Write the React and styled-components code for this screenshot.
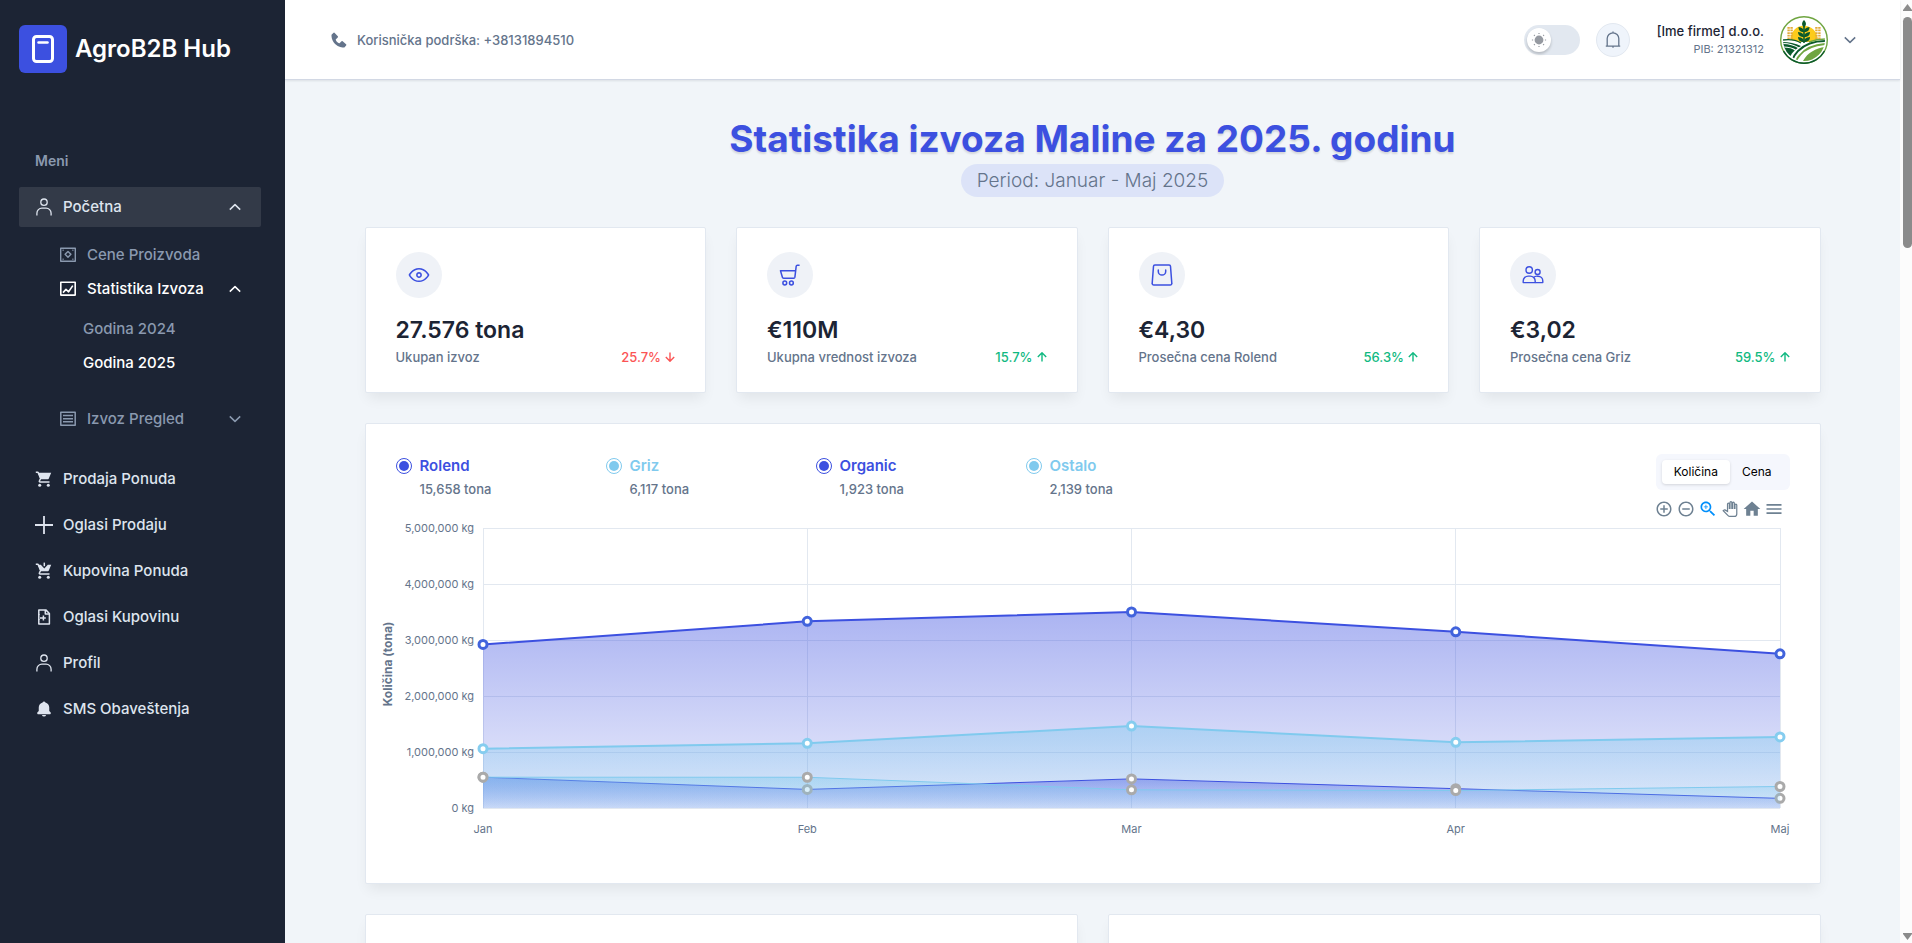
import React, { useLayoutEffect, useRef, useState } from 'react';
import styled, { createGlobalStyle, css } from 'styled-components';
import { BiSolidBell, BiSolidPhone } from 'react-icons/bi';

const c = {
  primary: '#3c50e0',
  sky: '#80caee',
  ink: '#1c2434',
  body: '#64748b',
  stroke: '#e2e8f0',
  canvas: '#f1f5f9',
  navText: '#dee4ee',
  navMuted: '#8a99af',
  up: '#10b981',
  down: '#fb5454',
};

const GlobalStyle = createGlobalStyle`
  *, *::before, *::after { box-sizing: border-box; }
  body {
    margin: 0;
    background: ${c.canvas};
    color: ${c.body};
    font-family: Inter, "Noto Sans", sans-serif;
    font-size: 15px;
    line-height: 24px;
  }
  h1, h2, h4, p, ul { margin: 0; padding: 0; }
  ul { list-style: none; }
  a { color: inherit; text-decoration: none; }
  button { border: 0; padding: 0; background: none; font: inherit; color: inherit; cursor: pointer; }
  svg { display: block; }
`;

const Shell = styled.div`
  display: flex;
  height: 100vh;
  overflow: hidden;
`;

/* ---------- sidebar ---------- */

const Sidebar = styled.aside`
  flex: 0 0 285px;
  background: ${c.ink};
  color: ${c.navText};
  font-weight: 500;
`;

const Brand = styled.a`
  display: flex;
  align-items: center;
  gap: 8px;
  padding: 25px 19px 0;
  color: #fff;
  font-size: 24px;
  font-weight: 600;
`;

const Nav = styled.nav`
  padding: 76px 24px 0 19px;
`;

const NavTitle = styled.h2`
  padding-left: 16px;
  margin-bottom: 14px;
  font-size: 14px;
  font-weight: 600;
  color: ${c.navMuted};
`;

const NavList = styled.ul`
  display: flex;
  flex-direction: column;
  gap: 6px;
`;

const NavLink = styled.a`
  display: flex;
  align-items: center;
  gap: 10px;
  height: 40px;
  padding: 0 20px 0 16px;
  border-radius: 2px;
  background: ${(p) => (p.$active ? '#333a48' : 'transparent')};
`;

const Grow = styled.span`
  flex: 1;
`;

const SubList = styled.ul`
  display: flex;
  flex-direction: column;
  gap: 10px;
  padding: 16px 20px 22px 41px;
`;

const SubLink = styled.a`
  display: flex;
  align-items: center;
  gap: 11px;
  color: ${(p) => (p.$active ? '#fff' : c.navMuted)};
`;

const YearList = styled.ul`
  display: flex;
  flex-direction: column;
  gap: 10px;
  padding: 16px 0 22px 23px;
`;

/* ---------- top bar ---------- */

const Main = styled.div`
  flex: 1;
  min-width: 0;
  display: flex;
  flex-direction: column;
`;

const TopBar = styled.header`
  position: relative;
  flex: 0 0 80px;
  display: flex;
  align-items: center;
  justify-content: space-between;
  padding: 0 44px;
  border-bottom: 1px solid #d2d8e4;
  background: #fff;
  box-shadow: 0 1px 2px rgba(28, 36, 52, 0.1);
`;

const Support = styled.a`
  display: flex;
  align-items: center;
  gap: 8px;
  font-size: 13px;
  font-weight: 500;
`;

const Tools = styled.div`
  display: flex;
  align-items: center;
  gap: 16px;
`;

const ThemeSwitch = styled.label`
  display: flex;
  align-items: center;
  width: 56px;
  height: 30px;
  padding: 0 3px;
  border-radius: 15px;
  background: ${c.stroke};
  cursor: pointer;
`;

const HiddenInput = styled.input`
  position: absolute;
  opacity: 0;
  width: 1px;
  height: 1px;
  margin: 0;
`;

const Knob = styled.span`
  display: grid;
  place-items: center;
  width: 24px;
  height: 24px;
  border-radius: 50%;
  background: #fff;
  box-shadow: 0 2px 3px rgba(0, 0, 0, 0.2);
`;

const BellButton = styled.button`
  display: grid;
  place-items: center;
  width: 34px;
  height: 34px;
  border: 1px solid ${c.stroke};
  border-radius: 50%;
  background: #eff4fb;
`;

const Account = styled.button`
  display: flex;
  align-items: center;
  gap: 16px;
  padding-left: 11px;
`;

const Company = styled.span`
  display: grid;
  text-align: right;
  font-size: 13px;
  line-height: 18px;
  font-weight: 500;
  color: ${c.ink};
`;

const TaxId = styled.span`
  font-size: 11px;
  font-weight: 400;
  color: ${c.body};
`;

/* ---------- content ---------- */

const Scroll = styled.main`
  flex: 1;
  min-height: 0;
  overflow-y: auto;
  scrollbar-width: none;
`;

const Container = styled.div`
  max-width: 1536px;
  margin: 0 auto;
  padding: 40px;
`;

const Heading = styled.div`
  display: flex;
  flex-direction: column;
  align-items: center;
  gap: 6px;
  margin-bottom: 30px;
`;

const Title = styled.h1`
  color: ${c.primary};
  font-size: 37px;
  line-height: 38px;
  font-weight: 700;
  text-shadow: 0 2px 2px rgba(0, 0, 0, 0.12);
`;

const Period = styled.p`
  padding: 0 16px;
  border-radius: 17px;
  background: #dce3f8;
  font-size: 19px;
  line-height: 33px;
  font-weight: 300;
`;

const StatGrid = styled.section`
  display: grid;
  grid-template-columns: repeat(4, 1fr);
  gap: 30px;
  margin-bottom: 30px;
`;

const Card = styled.article`
  border: 1px solid ${c.stroke};
  border-radius: 2px;
  background: #fff;
  box-shadow: 0 8px 13px -3px rgba(0, 0, 0, 0.07);
`;

const StatCard = styled(Card)`
  padding: 24px 30px;
`;

const IconDisc = styled.div`
  display: grid;
  place-items: center;
  width: 46px;
  height: 46px;
  margin-bottom: 16px;
  border-radius: 50%;
  background: #eff2f7;
  color: ${c.primary};
`;

const StatValue = styled.h4`
  color: ${c.ink};
  font-size: 23px;
  line-height: 32px;
  font-weight: 600;
`;

const StatRow = styled.div`
  display: flex;
  align-items: center;
  justify-content: space-between;
  font-size: 13px;
  line-height: 22px;
  font-weight: 500;
`;

const Change = styled.span`
  display: flex;
  align-items: center;
  gap: 4px;
  color: ${(p) => (p.$down ? c.down : c.up)};
`;

/* ---------- chart card ---------- */

const ChartCard = styled(Card)`
  padding: 30px 30px 24px;
  margin-bottom: 30px;
`;

const ChartHead = styled.div`
  display: flex;
  align-items: flex-start;
  justify-content: space-between;
`;

const Legend = styled.ul`
  display: flex;
  gap: 20px;
`;

const LegendItem = styled.li`
  display: flex;
  gap: 8px;
  min-width: 190px;
  font-size: 13px;
  line-height: 22px;
  font-weight: 500;
`;

const Dot = styled.span`
  flex: none;
  width: 16px;
  height: 16px;
  margin-top: 4px;
  padding: 2px;
  border: 1px solid ${(p) => p.$color};
  border-radius: 50%;
  background: ${(p) => p.$color} content-box;
`;

const LegendName = styled.p`
  font-size: 15px;
  line-height: 24px;
  font-weight: 600;
  color: ${(p) => p.$color};
`;

const ChartControls = styled.div`
  display: flex;
  flex-direction: column;
  align-items: flex-end;
  gap: 9px;
`;

const Segmented = styled.div`
  display: flex;
  padding: 6px;
  border-radius: 6px;
  background: #f5f7fd;
`;

const Segment = styled.button`
  padding: 0 12px;
  border-radius: 4px;
  color: #000;
  font-size: 12px;
  line-height: 24px;
  ${(p) =>
    p.$active &&
    css`
      background: #fff;
      box-shadow: 0 1px 3px rgba(0, 0, 0, 0.14);
    `}
`;

const Toolbar = styled.div`
  display: flex;
  gap: 2px;
  padding-right: 6px;
`;

const ToolButton = styled.button`
  display: grid;
  place-items: center;
  width: 20px;
  height: 20px;
  color: ${(p) => (p.$active ? '#008ffb' : '#6e8192')};
`;

const Plot = styled.div`
  margin-left: -15px;
  height: 340px;
`;

const AxisText = styled.text`
  font-size: ${(p) => (p.$strong ? 12 : 11)}px;
  font-weight: ${(p) => (p.$strong ? 700 : 400)};
  fill: ${c.body};
  text-anchor: ${(p) => p.$anchor || 'middle'};
`;

const LowerGrid = styled.section`
  display: grid;
  grid-template-columns: repeat(2, 1fr);
  gap: 30px;
`;

const LowerCard = styled(Card)`
  min-height: 420px;
`;

/* ---------- scroll bar ---------- */

const Rail = styled.div`
  flex: 0 0 12px;
  display: flex;
  flex-direction: column;
  align-items: flex-end;
  justify-content: space-between;
  padding: 4px 0 3px;
  background: #fcfcfc;
`;

const RailTop = styled.div`
  display: grid;
  gap: 6px;
`;

const Thumb = styled.div`
  width: 9px;
  height: 231px;
  border-radius: 5px;
  background: #8b8b8b;
`;

/* ---------- icons ---------- */

const Stroke = ({ size = 18, w = 1.3, children }) => (
  <svg
    width={size}
    height={size}
    viewBox={`0 0 ${size} ${size}`}
    fill="none"
    stroke="currentColor"
    strokeWidth={w}
    strokeLinejoin="round"
    aria-hidden="true"
  >
    {children}
  </svg>
);

const LogoMark = () => (
  <svg width="48" height="48" viewBox="0 0 48 48" fill="none" aria-hidden="true">
    <rect width="48" height="48" rx="6" fill={c.primary} />
    <rect x="14.5" y="11.5" width="19" height="25" rx="3" stroke="#fff" strokeWidth="3" />
    <path d="M19.5 17.5h9" stroke="#fff" strokeWidth="2.5" strokeLinecap="round" />
  </svg>
);

const UserIcon = () => (
  <Stroke>
    <circle cx="9" cy="4.2" r="3.2" />
    <path d="M1.9 17.6v-2.4a5 5 0 0 1 5-5h4.2a5 5 0 0 1 5 5v2.4" />
  </Stroke>
);

const PlusIcon = () => (
  <Stroke w={1.8}>
    <path d="M9 0v18M0 9h18" />
  </Stroke>
);

const SolidCart = ({ basket, children }) => (
  <Stroke w={1.5}>
    <path d="M.8 2.200h2.200l2.600 6.300-1.200 2.300a.8.8 0 0 0 .7 1.200h9.400" />
    <path d={basket} fill="currentColor" stroke="none" />
    <circle cx="4.700" cy="15.200" r="1.500" fill="currentColor" stroke="none" />
    <circle cx="13.300" cy="15.200" r="1.500" fill="currentColor" stroke="none" />
    {children}
  </Stroke>
);

const SellIcon = () => <SolidCart basket="M3.200 2.700H16.200L13.800 8.600a.9.9 0 0 1-.8.6H5.400Z" />;

const BuyIcon = () => (
  <SolidCart basket="M3.200 2.700H5.800L9.300 6.600 12.800 2.700H16.200L13.800 8.600a.9.9 0 0 1-.8.6H5.400Z">
    <path d="M9.300.6v3.600" />
  </SolidCart>
);

const FileIcon = () => (
  <Stroke w={1.5}>
    <path d="M3.8 7V1.9h7l3.6 3.6v10.6H3.8V11" />
    <path d="M3.8 6v6M10.3 1.9v4.2h4.1" />
    <path d="M5 10h5.8M8.4 7.4v5.2" />
  </Stroke>
);

const PriceIcon = () => (
  <Stroke size={16} w={1.4}>
    <rect x="0.7" y="1.2" width="14.6" height="13" />
    <path d="M8 4.4 10.9 7.3 8 10.2 5.1 7.3Z" />
    <path d="M2.6 3.2h1M12.4 3.2h1M2.6 12.2h1M12.4 12.2h1" />
  </Stroke>
);

const StatsIcon = () => (
  <Stroke size={16} w={1.6}>
    <rect x="0.8" y="1.3" width="14.4" height="12.8" />
    <path d="M3 11.6 6 8.4l2.6 2.4 4.2-6.2" />
  </Stroke>
);

const ListIcon = () => (
  <Stroke size={16} w={1.5}>
    <rect x="0.8" y="1.2" width="14.4" height="13" />
    <path d="M3 4.6h10M3 7.7h10M3 10.8h10" />
  </Stroke>
);

const Chevron = ({ up }) => (
  <Stroke size={12} w={1.5}>
    <path d={up ? 'M0.8 8.6 6 3.6l5.2 5' : 'M0.8 3.4 6 8.4l5.2-5'} />
  </Stroke>
);

const SunIcon = () => (
  <svg width="16" height="16" viewBox="0 0 16 16" fill="#969aa1" aria-hidden="true">
    <circle cx="8" cy="8" r="4.4" />
    <path
      d="M8 .9v1.2M8 13.9v1.2M.9 8h1.2M13.9 8h1.2M3 3l.8.8M12.2 12.2l.8.8M3 13l.8-.8M12.2 3.8 13 3"
      stroke="#969aa1"
      strokeWidth="1.2"
    />
  </svg>
);

const BellIcon = () => (
  <Stroke size={18} w={1.3}>
    <path d="M1.8 15.2h14.4M3.2 15.2V7.6a5.8 5.8 0 0 1 11.6 0v7.6M9 1.8V.6M9 15.2v1.6" />
  </Stroke>
);

const Avatar = () => (
  <svg width="48" height="48" viewBox="0 0 48 48" fill="none" role="img" aria-label="Logo firme">
    <defs>
      <clipPath id="avatar-clip">
        <circle cx="24" cy="24" r="21" />
      </clipPath>
    </defs>
    <circle cx="24" cy="24" r="23.3" fill="#fff" stroke="#6fa540" strokeWidth="1.4" />
    <path d="M3.5 35a23.3 23.3 0 0 0 41 0" stroke="#0b5a2c" strokeWidth="1.4" />
    <g clipPath="url(#avatar-clip)">
      <path d="M11 26a13 13 0 0 1 26-6c1 2 1 4 0 6Z" fill="#fccb1b" />
      <path d="M2 24c9-1 16 1 22 4 6-3 13-5 22-4v24H2Z" fill="#fff" />
      <path d="M2 26c6 0 13 1 19 4-5 3-9 6-11 11C5 37 2 32 2 26Z" fill="#0b5a2c" />
      <path d="M2 27.5c8 0 13 2 17 4.500M3 31c6 0 10 1 13 3.500" stroke="#fff" strokeWidth="1.200" />
      <path d="M45 25c-11 0-21 4-27 10-3 3-4.500 6-5.500 9" stroke="#0b5a2c" strokeWidth="1.800" />
      <path d="M45 28c-12 1-20 5-25 11-2 2-3 4-4 6" stroke="#6fa540" strokeWidth="1.800" />
      <path d="M45 31c-9 1-18 6-22 14 12 3 21-3 22-14Z" fill="#6fa540" />
      <path d="M29 26c4-1.500 10-3 16-3" stroke="#6fa540" strokeWidth="1.500" />
      <path d="M3 24c7-1 13 0 18 3" stroke="#0b5a2c" strokeWidth="1.300" />
    </g>
    <g stroke="#e2ab3a" strokeWidth="2.400" strokeDasharray="1.700 .9">
      <path d="M8.600 11v12.500M11.600 11v12.500M36.400 11v12.500M39.400 11v12.500" />
    </g>
    <path d="M24 9v18" stroke="#0b5a2c" strokeWidth="1.600" />
    <g fill="#0b5a2c">
      <path d="M24 4c2.600 3 2.600 5 0 7.500-2.600-2.500-2.600-4.500 0-7.500Z" />
      <path d="M24 16c-4 0-5.500-2-5.500-5 3.500.5 5.500 2 5.500 5Zm0 0c4 0 5.500-2 5.500-5-3.500.5-5.500 2-5.500 5Z" />
      <path d="M24 21c-4 0-6-2-6-5 4 .5 6 2 6 5Zm0 0c4 0 6-2 6-5-4 .5-6 2-6 5Z" />
      <path d="M24 26c-4 0-6-2-6-5 4 .5 6 2 6 5Zm0 0c4 0 6-2 6-5-4 .5-6 2-6 5Z" />
    </g>
  </svg>
);

const EyeIcon = () => (
  <svg width="22" height="16" viewBox="0 0 22 16" fill="currentColor" aria-hidden="true">
    <path d="M11 15.1156C4.19376 15.1156 0.825012 8.61876 0.687512 8.34376C0.584387 8.13751 0.584387 7.86251 0.687512 7.65626C0.825012 7.38126 4.19376 0.918762 11 0.918762C17.8063 0.918762 21.175 7.38126 21.3125 7.65626C21.4156 7.86251 21.4156 8.13751 21.3125 8.34376C21.175 8.61876 17.8063 15.1156 11 15.1156ZM2.26876 8.00001C3.02501 9.27189 5.98126 13.5688 11 13.5688C16.0188 13.5688 18.975 9.27189 19.7313 8.00001C18.975 6.72814 16.0188 2.43126 11 2.43126C5.98126 2.43126 3.02501 6.72814 2.26876 8.00001Z" />
    <path d="M11 10.9219C9.38438 10.9219 8.07812 9.61562 8.07812 8C8.07812 6.38438 9.38438 5.07812 11 5.07812C12.6156 5.07812 13.9219 6.38438 13.9219 8C13.9219 9.61562 12.6156 10.9219 11 10.9219ZM11 6.625C10.2437 6.625 9.625 7.24375 9.625 8C9.625 8.75625 10.2437 9.375 11 9.375C11.7563 9.375 12.375 8.75625 12.375 8C12.375 7.24375 11.7563 6.625 11 6.625Z" />
  </svg>
);

const CartIcon = () => (
  <Stroke size={22} w={1.5}>
    <path d="M20.6 1.2h-2.200a1.200 1.200 0 0 0-1.200 1L15.900 13.200a1.200 1.200 0 0 1-1.200 1H4.600a1.200 1.200 0 0 1-1.200-.9L1.500 6.800h15" />
    <circle cx="5.800" cy="19" r="1.900" />
    <circle cx="12.400" cy="19" r="1.900" />
  </Stroke>
);

const BagIcon = () => (
  <Stroke size={22} w={1.5}>
    <path d="M3.900.9h14.200a1.400 1.400 0 0 1 1.400 1.300l1.300 17a1.600 1.600 0 0 1-1.600 1.800H2.800a1.600 1.600 0 0 1-1.600-1.800l1.300-17A1.400 1.400 0 0 1 3.900.9Z" />
    <path d="M7.300 6v1.400a3.700 3.700 0 0 0 7.400 0V6" strokeLinecap="round" />
  </Stroke>
);

const PeopleIcon = () => (
  <Stroke size={22} w={1.4}>
    <circle cx="7.200" cy="6" r="3.200" />
    <circle cx="15.600" cy="8" r="2.500" />
    <path d="M1.200 18.600v-1.500a5 5 0 0 1 5-5h2a5 5 0 0 1 5 5v1.500Z" />
    <path d="M11.500 13.600a5 5 0 0 1 4-1.400h.5a4.800 4.800 0 0 1 4.800 4.800v1.600h-7.600" />
  </Stroke>
);

const Arrow = ({ down }) => (
  <Stroke size={10} w={1.4}>
    <path d={down ? 'M5 .4v8.800M.8 5l4.200 4.200L9.200 5' : 'M5 9.600V.8M.8 5 5 .8 9.200 5'} />
  </Stroke>
);

const Glyph = ({ size, children }) => (
  <svg width={size} height={size} viewBox="0 0 24 24" fill="currentColor" aria-hidden="true">
    {children}
  </svg>
);

const RING =
  'M12 2C6.480 2 2 6.480 2 12s4.480 10 10 10 10-4.480 10-10S17.520 2 12 2zm0 18c-4.410 0-8-3.590-8-8s3.590-8 8-8 8 3.590 8 8-3.590 8-8 8z';

const toolItems = [
  ['Uvećaj', <Glyph size={18}><path d={`M13 7h-2v4H7v2h4v4h2v-4h4v-2h-4V7z${RING}`} /></Glyph>],
  ['Umanji', <Glyph size={18}><path d={`M7 11v2h10v-2H7z${RING}`} /></Glyph>],
  [
    'Izbor zumiranja',
    <Glyph size={20}>
      <path d="M15.5 14h-.79l-.28-.27C15.410 12.590 16 11.110 16 9.500 16 5.910 13.090 3 9.500 3S3 5.910 3 9.500 5.910 16 9.500 16c1.610 0 3.090-.59 4.230-1.570l.27.28v.79l5 4.990L20.490 19l-4.990-5zm-6 0C7.010 14 5 11.990 5 9.500S7.010 5 9.500 5 14 7.010 14 9.500 11.990 14 9.500 14z" />
      <path d="M12 10h-2v2H9v-2H7V9h2V7h1v2h2v1z" />
    </Glyph>,
  ],
  [
    'Pomeranje',
    <svg width="16" height="16" viewBox="-1 -1 26 26" fill="#fff" stroke="currentColor" strokeWidth="2" aria-hidden="true">
      <path d="M23 5.500V20c0 2.200-1.800 4-4 4h-7.300c-1.080 0-2.100-.43-2.850-1.190L1 14.830s1.260-1.230 1.300-1.250c.22-.19.49-.29.79-.29.22 0 .42.06.6.16.04.01 4.310 2.460 4.310 2.460V4c0-.83.67-1.500 1.500-1.500S11 3.170 11 4v7h1V1.500c0-.83.67-1.500 1.500-1.500S15 .67 15 1.500V11h1V2.500c0-.83.67-1.500 1.500-1.500s1.500.67 1.500 1.500V11h1V5.500c0-.83.67-1.500 1.500-1.500s1.500.67 1.500 1.500z" />
    </svg>,
  ],
  ['Početni prikaz', <Glyph size={20}><path d="M10 20v-6h4v6h5v-8h3L12 3 2 12h3v8z" /></Glyph>],
  ['Meni grafikona', <Glyph size={20}><path d="M3 18h18v-2H3v2zm0-5h18v-2H3v2zm0-7v2h18V6H3z" /></Glyph>],
];

/* ---------- data ---------- */

const stats = [
  { icon: <EyeIcon />, value: '27.576 tona', label: 'Ukupan izvoz', change: '25.7%', down: true },
  { icon: <CartIcon />, value: '€110M', label: 'Ukupna vrednost izvoza', change: '15.7%' },
  { icon: <BagIcon />, value: '€4,30', label: 'Prosečna cena Rolend', change: '56.3%' },
  { icon: <PeopleIcon />, value: '€3,02', label: 'Prosečna cena Griz', change: '59.5%' },
];

const months = ['Jan', 'Feb', 'Mar', 'Apr', 'Maj'];

const series = [
  { name: 'Rolend', total: '15,658 tona', color: c.primary, marker: '#4163dc', width: 2, data: [2.92, 3.334, 3.5, 3.147, 2.754] },
  { name: 'Griz', total: '6,117 tona', color: c.sky, marker: '#85cdef', width: 2, data: [1.06, 1.155, 1.464, 1.173, 1.269] },
  { name: 'Organic', total: '1,923 tona', color: c.primary, marker: '#aaaaaa', width: 1, data: [0.55, 0.332, 0.52, 0.345, 0.172] },
  { name: 'Ostalo', total: '2,139 tona', color: c.sky, marker: '#aaaaaa', width: 1, data: [0.55, 0.549, 0.325, 0.312, 0.384] },
];

const more = [
  [<SellIcon />, 'Prodaja Ponuda'],
  [<PlusIcon />, 'Oglasi Prodaju'],
  [<BuyIcon />, 'Kupovina Ponuda'],
  [<FileIcon />, 'Oglasi Kupovinu'],
  [<UserIcon />, 'Profil'],
  [<BiSolidBell size={18} />, 'SMS Obaveštenja'],
];

/* ---------- chart ---------- */

function AreaChart() {
  const ref = useRef(null);
  const [width, setWidth] = useState(1409);

  useLayoutEffect(() => {
    const measure = () => setWidth(ref.current.clientWidth);
    measure();
    const observer = new ResizeObserver(measure);
    observer.observe(ref.current);
    return () => observer.disconnect();
  }, []);

  const left = 102;
  const right = width - 10;
  const top = 9;
  const bottom = 289;
  const x = (i) => left + ((right - left) * i) / (months.length - 1);
  const y = (v) => bottom - ((bottom - top) * v) / 5;

  return (
    <Plot ref={ref}>
      <svg width={width} height="340" role="img" aria-label="Količina izvoza po mesecima">
        <defs>
          {series.map((s) => (
            <linearGradient key={s.name} id={`fill-${s.name}`} x1="0" y1="0" x2="0" y2="1">
              <stop offset="0" stopColor={s.color} stopOpacity="0.43" />
              <stop offset="1" stopColor={s.color} stopOpacity="0.1" />
            </linearGradient>
          ))}
        </defs>
        <g stroke={c.stroke} shapeRendering="crispEdges">
          {[0, 1, 2, 3, 4, 5].map((v) => (
            <line key={v} x1={left} x2={right} y1={y(v)} y2={y(v)} />
          ))}
          {months.map((m, i) => (
            <line key={m} x1={x(i)} x2={x(i)} y1={top} y2={bottom} />
          ))}
        </g>
        {series.map((s) => {
          const points = s.data.map((v, i) => `${x(i)},${y(v)}`).join(' ');
          return (
            <g key={s.name}>
              <polygon points={`${left},${bottom} ${points} ${right},${bottom}`} fill={`url(#fill-${s.name})`} />
              <polyline points={points} fill="none" stroke={s.color} strokeWidth={s.width} />
              {s.data.map((v, i) => (
                <circle key={i} cx={x(i)} cy={y(v)} r="4" fill="#fff" stroke={s.marker} strokeWidth="3" />
              ))}
            </g>
          );
        })}
        {[0, 1, 2, 3, 4, 5].map((v) => (
          <AxisText key={v} $anchor="end" x={left - 9} y={y(v) + 4}>
            {v ? `${v},000,000 kg` : '0 kg'}
          </AxisText>
        ))}
        {months.map((m, i) => (
          <AxisText key={m} x={x(i)} y={bottom + 25}>
            {m}
          </AxisText>
        ))}
        <AxisText $strong transform="rotate(-90 11 145)" x="11" y="145">
          Količina (tona)
        </AxisText>
      </svg>
    </Plot>
  );
}

/* ---------- page ---------- */

export default function App() {
  const [metric, setMetric] = useState('Količina');

  return (
    <Shell>
      <GlobalStyle />
      <Sidebar>
        <Brand href="#">
          <LogoMark />
          AgroB2B Hub
        </Brand>
        <Nav>
          <NavTitle>Meni</NavTitle>
          <NavList>
            <li>
              <NavLink href="#" $active>
                <UserIcon />
                <Grow>Početna</Grow>
                <Chevron up />
              </NavLink>
              <SubList>
                <li>
                  <SubLink href="#">
                    <PriceIcon />
                    Cene Proizvoda
                  </SubLink>
                </li>
                <li>
                  <SubLink href="#" $active>
                    <StatsIcon />
                    <Grow>Statistika Izvoza</Grow>
                    <Chevron up />
                  </SubLink>
                  <YearList>
                    <li>
                      <SubLink href="#">Godina 2024</SubLink>
                    </li>
                    <li>
                      <SubLink href="#" $active>
                        Godina 2025
                      </SubLink>
                    </li>
                  </YearList>
                </li>
                <li>
                  <SubLink href="#">
                    <ListIcon />
                    <Grow>Izvoz Pregled</Grow>
                    <Chevron />
                  </SubLink>
                </li>
              </SubList>
            </li>
            {more.map(([icon, label]) => (
              <li key={label}>
                <NavLink href="#">
                  {icon}
                  {label}
                </NavLink>
              </li>
            ))}
          </NavList>
        </Nav>
      </Sidebar>

      <Main>
        <TopBar>
          <Support href="tel:+38131894510">
            <BiSolidPhone size={20} />
            Korisnička podrška: +38131894510
          </Support>
          <Tools>
            <ThemeSwitch>
              <HiddenInput type="checkbox" aria-label="Tamna tema" />
              <Knob>
                <SunIcon />
              </Knob>
            </ThemeSwitch>
            <BellButton aria-label="Obaveštenja">
              <BellIcon />
            </BellButton>
            <Account>
              <Company>
                [Ime firme] d.o.o.
                <TaxId>PIB: 21321312</TaxId>
              </Company>
              <Avatar />
              <Chevron />
            </Account>
          </Tools>
        </TopBar>

        <Scroll>
          <Container>
            <Heading>
              <Title>Statistika izvoza Maline za 2025. godinu</Title>
              <Period>Period: Januar - Maj 2025</Period>
            </Heading>

            <StatGrid>
              {stats.map((s) => (
                <StatCard key={s.label}>
                  <IconDisc>{s.icon}</IconDisc>
                  <StatValue>{s.value}</StatValue>
                  <StatRow>
                    {s.label}
                    <Change $down={s.down}>
                      {s.change}
                      <Arrow down={s.down} />
                    </Change>
                  </StatRow>
                </StatCard>
              ))}
            </StatGrid>

            <ChartCard>
              <ChartHead>
                <Legend>
                  {series.map((s) => (
                    <LegendItem key={s.name}>
                      <Dot $color={s.color} />
                      <div>
                        <LegendName $color={s.color}>{s.name}</LegendName>
                        {s.total}
                      </div>
                    </LegendItem>
                  ))}
                </Legend>
                <ChartControls>
                  <Segmented>
                    {['Količina', 'Cena'].map((m) => (
                      <Segment key={m} $active={m === metric} onClick={() => setMetric(m)}>
                        {m}
                      </Segment>
                    ))}
                  </Segmented>
                  <Toolbar>
                    {toolItems.map(([label, icon], i) => (
                      <ToolButton key={label} aria-label={label} $active={i === 2}>
                        {icon}
                      </ToolButton>
                    ))}
                  </Toolbar>
                </ChartControls>
              </ChartHead>
              <AreaChart />
            </ChartCard>

            <LowerGrid>
              <LowerCard />
              <LowerCard />
            </LowerGrid>
          </Container>
        </Scroll>
      </Main>

      <Rail aria-hidden="true">
        <RailTop>
          <svg width="9" height="7" viewBox="0 0 9 7" fill="#8b8b8b">
            <path d="M4.500 0 9 6v1H0V6Z" />
          </svg>
          <Thumb />
        </RailTop>
        <svg width="9" height="7" viewBox="0 0 9 7" fill="#8b8b8b">
          <path d="M4.500 7 0 1V0h9v1Z" />
        </svg>
      </Rail>
    </Shell>
  );
}
